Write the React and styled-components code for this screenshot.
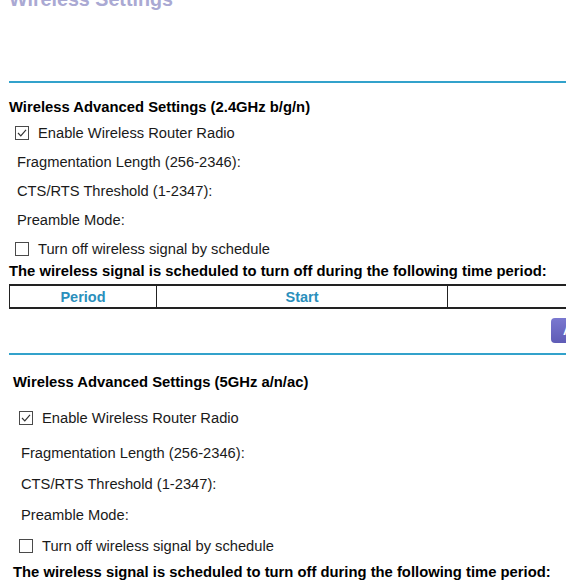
import React from "react";
import styled, { createGlobalStyle } from "styled-components";

const Global = createGlobalStyle`
  html, body { margin: 0; padding: 0; background: #fff; overflow: hidden; }
  body { font-family: Arial, "Liberation Sans", sans-serif; color: #111; }
`;

const Page = styled.div`
  width: 620px;
  box-sizing: border-box;
  padding-left: 9px;
  display: flex;
  flex-direction: column;
`;

const Title = styled.h1`
  margin: -11px 0 0 0;
  font-size: 19.7px;
  line-height: 20px;
  font-weight: bold;
  color: #aaa9d3;
`;

const Rule = styled.div`
  height: 2px;
  background: #32a2cb;
  margin-top: ${(p) => p.$mt}px;
`;

const Section = styled.section`
  display: flex;
  flex-direction: column;
  padding-left: ${(p) => p.$indent}px;
`;

const Heading = styled.h2`
  margin: ${(p) => p.$mt}px 0 ${(p) => p.$mb}px 0;
  font-size: 14.8px;
  line-height: 20px;
  font-weight: bold;
  color: #000;
`;

const Row = styled.div`
  display: flex;
  align-items: center;
  height: ${(p) => p.$h}px;
  padding-left: ${(p) => p.$pl}px;
  font-size: 14.7px;
  color: #1a1a1a;
`;

const Box = styled.span`
  width: 14px;
  height: 14px;
  box-sizing: border-box;
  border: 1px solid #4a4a4a;
  background: #fff;
  margin-right: 9px;
  display: inline-flex;
  align-items: center;
  justify-content: center;
`;

const ScheduleNote = styled.div`
  font-size: 14.8px;
  line-height: 18px;
  font-weight: bold;
  color: #000;
  margin-top: ${(p) => p.$mt}px;
  white-space: nowrap;
`;

const Table = styled.div`
  display: grid;
  grid-template-columns: 147px 291px 291px;
  width: 729px;
  margin-top: 4px;
  height: 25px;
  box-sizing: border-box;
  border-top: 2px solid #222;
  border-bottom: 2px solid #222;
  border-left: 1.5px solid #222;
`;

const HeadCell = styled.div`
  display: flex;
  align-items: center;
  justify-content: center;
  font-size: 14.5px;
  font-weight: bold;
  color: #2a8fbc;
  border-right: 1.5px solid #222;
`;

const ButtonRow = styled.div`
  display: flex;
  justify-content: flex-end;
  margin-top: 9px;
`;

const PurpleButton = styled.button`
  width: 69px;
  height: 25px;
  border: none;
  border-radius: 4px;
  background: linear-gradient(#7a78d0, #5f5cb6);
  color: #fff;
  font-family: Arial, "Liberation Sans", sans-serif;
  font-weight: bold;
  font-size: 13px;
  text-align: left;
  padding-left: 12px;
`;

function Check({ checked }) {
  return (
    <Box>
      {checked && (
        <svg width="12" height="12" viewBox="0 0 12 12">
          <path d="M2 6 L4.8 8.8 L10 2.8" fill="none" stroke="#333" strokeWidth="1.2" />
        </svg>
      )}
    </Box>
  );
}

function Advanced({ title, indent, headMt, headMb, rows, noteMt }) {
  return (
    <Section $indent={indent}>
      <Heading $mt={headMt} $mb={headMb}>{title}</Heading>
      <Row $h={rows[0]} $pl={6}>
        <Check checked />
        Enable Wireless Router Radio
      </Row>
      <Row $h={rows[1]} $pl={8}>Fragmentation Length (256-2346):</Row>
      <Row $h={rows[2]} $pl={8}>CTS/RTS Threshold (1-2347):</Row>
      <Row $h={rows[3]} $pl={8}>Preamble Mode:</Row>
      <Row $h={rows[4]} $pl={6}>
        <Check />
        Turn off wireless signal by schedule
      </Row>
      <ScheduleNote $mt={noteMt}>
        The wireless signal is scheduled to turn off during the following time period:
      </ScheduleNote>
    </Section>
  );
}

export default function App() {
  return (
    <>
      <Global />
      <Page>
        <Title>Wireless Settings</Title>
        <Rule $mt={72} />
        <Advanced
          title="Wireless Advanced Settings (2.4GHz b/g/n)"
          indent={0}
          headMt={14}
          headMb={1}
          rows={[29, 29, 29, 29, 29]}
          noteMt={-1}
        />
        <Table>
          <HeadCell>Period</HeadCell>
          <HeadCell>Start</HeadCell>
          <HeadCell>End</HeadCell>
        </Table>
        <ButtonRow>
          <PurpleButton>Add</PurpleButton>
        </ButtonRow>
        <Rule $mt={10} />
        <Advanced
          title="Wireless Advanced Settings (5GHz a/n/ac)"
          indent={4}
          headMt={17}
          headMb={6}
          rows={[39, 31, 31, 31, 31]}
          noteMt={2}
        />
      </Page>
    </>
  );
}
